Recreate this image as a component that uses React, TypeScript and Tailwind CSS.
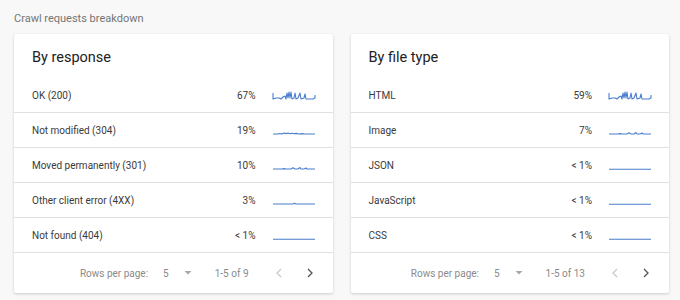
import React from 'react';

type Row = { label: string; pct: string; spark: string };

const SPARK_HIGH =
  'M1 3 L1 9 L4 8 L7 8 L9 9 L11 7 L13 6 L14 9 L15 3 L16 8 L17 2 L18 8 L19 2 L20 9 L22 8 L23 3 L24 9 L26 8 L28 3 L29 9 L32 8 L33 4 L34 9 L38 9 L41 9 L43 8 L43 5';
const SPARK_MID =
  'M1 9 L6 9 L8 8.5 L10 9 L12 8 L14 8.6 L16 8 L18 8.7 L20 8.2 L22 8.8 L24 8.4 L27 9 L30 8.6 L33 9 L43 9';
const SPARK_LOW =
  'M1 9 L10 9 L12 8.6 L14 9 L19 9 L21 7.8 L23 9 L26 9 L28 7.5 L29 9 L32 9 L34 8 L35 9 L43 9';
const SPARK_TINY = 'M1 9 L21 9 L22.5 8.2 L24 9 L43 9';
const SPARK_FLAT = 'M1 9.3 L43 9.3';

const responses: Row[] = [
  { label: 'OK (200)', pct: '67%', spark: SPARK_HIGH },
  { label: 'Not modified (304)', pct: '19%', spark: SPARK_MID },
  { label: 'Moved permanently (301)', pct: '10%', spark: SPARK_LOW },
  { label: 'Other client error (4XX)', pct: '3%', spark: SPARK_TINY },
  { label: 'Not found (404)', pct: '< 1%', spark: SPARK_FLAT },
];

const fileTypes: Row[] = [
  { label: 'HTML', pct: '59%', spark: SPARK_HIGH },
  { label: 'Image', pct: '7%', spark: SPARK_LOW },
  { label: 'JSON', pct: '< 1%', spark: SPARK_FLAT },
  { label: 'JavaScript', pct: '< 1%', spark: SPARK_FLAT },
  { label: 'CSS', pct: '< 1%', spark: SPARK_FLAT },
];

function Spark({ d }: { d: string }) {
  return (
    <svg width="44" height="12" viewBox="0 0 44 12" className="shrink-0">
      <path d={d} fill="none" stroke="#4a7ccc" strokeWidth="1.1" strokeLinejoin="round" />
    </svg>
  );
}

function BreakdownCard({ title, rows, total }: { title: string; rows: Row[]; total: number }) {
  return (
    <div className="flex-1 bg-white shadow-[0_1px_3px_rgba(0,0,0,0.18)] rounded-[2px]">
      <div className="h-[44px] flex items-center pl-[18px] pt-[3px] text-[14.5px] text-[#212121]">{title}</div>
      {rows.map((r) => (
        <div
          key={r.label}
          className="h-[35px] flex items-center pl-[18px] pr-[17px] pt-[1px] border-b border-[#e0e0e0] text-[10px] text-[#3a3a3a]"
        >
          <span className="flex-1">{r.label}</span>
          <span className="mr-[16px]">{r.pct}</span>
          <Spark d={r.spark} />
        </div>
      ))}
      <div className="h-[40px] flex items-center justify-end pr-[19px] text-[10px] text-[#8a8a8a]">
        <span>Rows per page:</span>
        <span className="ml-[15px]">5</span>
        <svg width="8" height="6" viewBox="0 0 8 6" className="ml-[15px]">
          <path d="M0.5 1 L7.5 1 L4 4.5 Z" fill="#a8a8a8" />
        </svg>
        <span className="ml-[23px]">1-5 of {total}</span>
        <svg width="8" height="12" viewBox="0 0 8 12" className="ml-[26px]">
          <path d="M6 2 L2 6 L6 10" fill="none" stroke="#c8c8c8" strokeWidth="1.3" />
        </svg>
        <svg width="8" height="12" viewBox="0 0 8 12" className="ml-[23px]">
          <path d="M2 2 L6 6 L2 10" fill="none" stroke="#555" strokeWidth="1.3" />
        </svg>
      </div>
    </div>
  );
}

export default function App() {
  return (
    <div
      className="w-[680px] h-[300px] bg-[#f8f8f8] pl-[14px] pr-[11px] pt-[11px]"
      style={{ fontFamily: 'Roboto, "Liberation Sans", sans-serif' }}
    >
      <div className="text-[11px] text-[#757575] h-[23px] leading-[16px]">Crawl requests breakdown</div>
      <div className="flex gap-[18px]">
        <BreakdownCard title="By response" rows={responses} total={9} />
        <BreakdownCard title="By file type" rows={fileTypes} total={13} />
      </div>
    </div>
  );
}
